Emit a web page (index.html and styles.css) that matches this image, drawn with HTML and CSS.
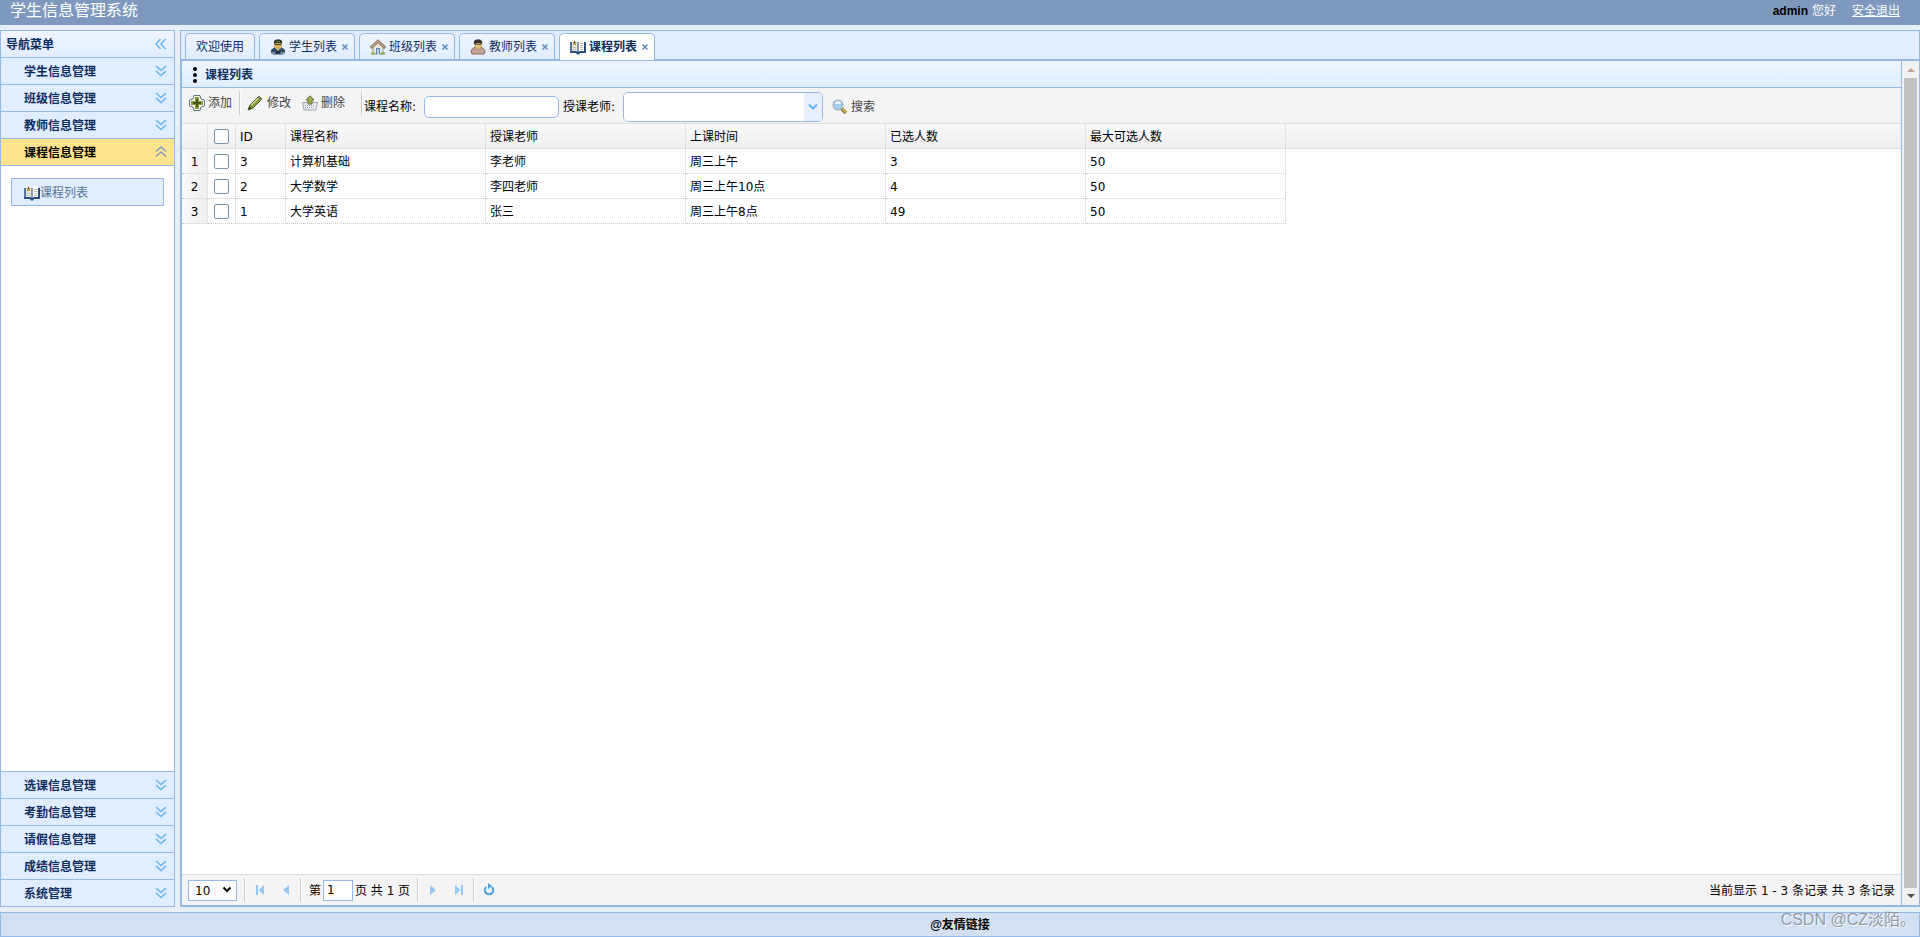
FILE: index.html
```html
<!DOCTYPE html>
<html lang="zh-CN">
<head>
<meta charset="utf-8">
<title>学生信息管理系统</title>
<link rel="stylesheet" href="styles.css">
</head>
<body>
<svg class="defs" aria-hidden="true">
  <symbol id="i-down" viewBox="0 1 16 16"><path d="M3 3l5 4.500 5-4.500M3 8l5 4.500 5-4.500"/></symbol>
  <symbol id="i-up" viewBox="0 1 16 16"><path d="M3 7.500l5-4.500 5 4.500M3 12.500l5-4.500 5 4.500"/></symbol>
  <symbol id="i-left" viewBox="0 1 16 16"><path d="M7.500 3L3 8l4.500 5M12.500 3L8 8l4.500 5"/></symbol>
  <symbol id="i-book" viewBox="0 0 16 16">
    <path d="M0 3h16v11h-6l-1 1.500H7L6 14H0z" fill="#294d7c"/>
    <path d="M0 3h1.500v9.500H0z" fill="#5c7da5"/>
    <path d="M2 1.500h4.500l1 1V13l-1-1H2z" fill="#e9e4dc"/><path d="M8.500 2.500l1-1H14V12H9.500l-1 1z" fill="#fff"/>
    <path d="M8 3v10" stroke="#8a8f96"/><path d="M3 3h3v3H3z" fill="#b49b42"/><path d="M4 2h1v2H4z" fill="#56502e"/>
    <path d="M10 4.500h3M10 6.500h3M10 8.500h3M10 10.500h3M3 8.500h3M3 10.500h3" stroke="#c5b9ac"/>
  </symbol>
  <symbol id="i-student" viewBox="0 0 16 16">
    <path d="M1 14v-3l3-2.500h8l3 2.500v3l-2 1.500H3z" fill="#344966"/><path d="M5 8.500h6L8 12z" fill="#d8c275"/>
    <path d="M4 4h8v4l-2 2H6L4 8z" fill="#d5b365"/><path d="M4 6V2l2-1.500h4L12 2v4l-1-2H5z" fill="#2c2c22"/>
    <path d="M5 5.500h6" stroke="#3b371f"/><path d="M6 2.500h4" stroke="#6e8240"/><path d="M1 13h4v2H2zM11 13h4l-1 2h-3z" fill="#8194aa"/><path d="M6 12h4v2H6z" fill="#242f3d"/>
  </symbol>
  <symbol id="i-teacher" viewBox="0 0 16 16">
    <path d="M1 13c0-3 3-5 7-5s7 2 7 5l-1 2H2z" fill="#c3a293" stroke="#8b6d60"/>
    <path d="M5 3h7v4l-2 3H7L5 8z" fill="#e0c17b" stroke="#a98b49" stroke-width=".5"/><path d="M4 6V2l2-1.500h4L12 2v3l-4-1-3 1z" fill="#34342a"/><path d="M5 5.500h6" stroke="#7a6b45"/>
  </symbol>
  <symbol id="i-house" viewBox="0 0 16 16">
    <path d="M3 8l5-5 5 5v7H3z" fill="#e9e7df" stroke="#9a9a94"/><path d="M6 9h4v6H6z" fill="#5c83ad"/><path d="M7 10h2v5H7z" fill="#b9d3e6"/>
    <path d="M.800 9L8 2.200 15.200 9" fill="none" stroke="#796753" stroke-width="3"/><path d="M1.500 8.500L8 2.300l6.500 6.200" fill="none" stroke="#c6aa91" stroke-width="1.500"/>
    <path d="M1 14.500h4M11 14.500h4" stroke="#82ad42" stroke-width="2"/>
  </symbol>
  <symbol id="i-add" viewBox="0 0 16 16">
    <path d="M5 .500h6l1 3.500 3.500 1v6L12 12l-1 3.500H5L4 12 .500 11V5L4 4z" fill="#f4f6ec" stroke="#5c7480"/><path d="M6 2h4v4h4v4h-4v4H6v-4H2V6h4z" fill="#899b35"/><path d="M7 4h2v3h3v2H9v3H7V9H4V7h3z" fill="#4b5619"/>
  </symbol>
  <symbol id="i-edit" viewBox="0 0 16 16">
    <path d="M1 15l2-5L11.500 1.500 14.500 4.500 6 13z" fill="#829a36" stroke="#4d5b24"/><path d="M4 10.500l8-8" stroke="#c5d58d" stroke-width="1.500"/><path d="M1 15l1.500-4L5 13.500z" fill="#404326"/><path d="M11.500 1.500l3 3" stroke="#6b6b58" stroke-width="2"/>
  </symbol>
  <symbol id="i-remove" viewBox="0 0 16 16">
    <path d="M.500 7.500h15L14 15H2z" fill="#e8eaed" stroke="#a0a4ac"/><path d="M3 10.500h10M3 12.500h10" stroke="#98a2ae" stroke-dasharray="1 1"/>
    <path d="M8 .800L12 5h-2v4H6V5H4z" fill="#9daf51" stroke="#647333"/>
  </symbol>
  <symbol id="i-search" viewBox="0 0 16 16">
    <path d="M9.500 9.500L14 14" stroke="#8a7430" stroke-width="3.500"/><path d="M10.500 10L14 13.500" stroke="#e2c65a" stroke-width="1.500"/>
    <circle cx="6" cy="6" r="4.800" fill="#a3cff3" stroke="#a9b4c0" stroke-width="1.500"/><path d="M3 5a3 3 0 016 0z" fill="#e5f3ff"/>
  </symbol>
</svg>

<header class="top">
  <h1 class="brand">学生信息管理系统</h1>
  <div class="account"><strong class="user">admin</strong><span>您好</span><a class="logout" href="#">安全退出</a></div>
</header>

<div class="body">
  <nav class="side">
    <div class="side-head"><span>导航菜单</span><button class="ico-btn" aria-label="折叠"><svg class="chev"><use href="#i-left"/></svg></button></div>
    <button class="acc">学生信息管理<svg class="chev"><use href="#i-down"/></svg></button>
    <button class="acc">班级信息管理<svg class="chev"><use href="#i-down"/></svg></button>
    <button class="acc">教师信息管理<svg class="chev"><use href="#i-down"/></svg></button>
    <button class="acc open">课程信息管理<svg class="chev"><use href="#i-up"/></svg></button>
    <div class="acc-body"><a class="side-link" href="#"><svg class="ico"><use href="#i-book"/></svg>课程列表</a></div>
    <button class="acc low">选课信息管理<svg class="chev"><use href="#i-down"/></svg></button>
    <button class="acc low">考勤信息管理<svg class="chev"><use href="#i-down"/></svg></button>
    <button class="acc low">请假信息管理<svg class="chev"><use href="#i-down"/></svg></button>
    <button class="acc low">成绩信息管理<svg class="chev"><use href="#i-down"/></svg></button>
    <button class="acc low">系统管理<svg class="chev"><use href="#i-down"/></svg></button>
  </nav>

  <main class="main">
    <div class="tabs">
      <button class="tab plain">欢迎使用</button>
      <div class="tab"><svg class="ico"><use href="#i-student"/></svg><span>学生列表</span><button class="close" aria-label="关闭"><svg viewBox="0 0 8 8"><path d="M1.500 1.500l5 5M6.500 1.500l-5 5"/></svg></button></div>
      <div class="tab"><svg class="ico"><use href="#i-house"/></svg><span>班级列表</span><button class="close" aria-label="关闭"><svg viewBox="0 0 8 8"><path d="M1.500 1.500l5 5M6.500 1.500l-5 5"/></svg></button></div>
      <div class="tab"><svg class="ico"><use href="#i-teacher"/></svg><span>教师列表</span><button class="close" aria-label="关闭"><svg viewBox="0 0 8 8"><path d="M1.500 1.500l5 5M6.500 1.500l-5 5"/></svg></button></div>
      <div class="tab current"><svg class="ico"><use href="#i-book"/></svg><span>课程列表</span><button class="close" aria-label="关闭"><svg viewBox="0 0 8 8"><path d="M1.500 1.500l5 5M6.500 1.500l-5 5"/></svg></button></div>
    </div>
    <div class="pane">
      <section class="panel">
        <h2 class="panel-head"><svg class="dots" viewBox="0 0 4 16"><circle cx="2" cy="2" r="2"/><circle cx="2" cy="8" r="2"/><circle cx="2" cy="14" r="2"/></svg>课程列表</h2>
        <div class="toolbar">
          <button class="tool"><svg class="ico"><use href="#i-add"/></svg>添加</button>
          <i class="sep"></i>
          <button class="tool edit"><svg class="ico"><use href="#i-edit"/></svg>修改</button>
          <button class="tool"><svg class="ico"><use href="#i-remove"/></svg>删除</button>
          <i class="sep wide"></i>
          <form class="filter">
            <label for="course">课程名称:</label>
            <input class="text" id="course" type="text">
            <label for="teacher">授课老师:</label>
            <span class="combo"><input id="teacher" type="text"><button type="button" class="combo-btn" aria-label="展开"><svg viewBox="0 0 12 8"><path d="M2 1.500l4 4 4-4"/></svg></button></span>
            <button class="tool search" type="button"><svg class="ico"><use href="#i-search"/></svg>搜索</button>
          </form>
        </div>
        <div class="grid">
          <table>
            <colgroup><col class="c-no"><col class="c-check"><col class="c-id"><col class="c-data"><col class="c-data"><col class="c-data"><col class="c-data"><col class="c-data"><col></colgroup>
            <thead><tr><th></th><th class="mid"><input type="checkbox" aria-label="全选"></th><th>ID</th><th>课程名称</th><th>授课老师</th><th>上课时间</th><th>已选人数</th><th>最大可选人数</th><th class="rest"></th></tr></thead>
            <tbody>
              <tr><td class="no">1</td><td class="mid"><input type="checkbox" aria-label="选择 1"></td><td>3</td><td>计算机基础</td><td>李老师</td><td>周三上午</td><td>3</td><td>50</td><td class="rest"></td></tr>
              <tr><td class="no">2</td><td class="mid"><input type="checkbox" aria-label="选择 2"></td><td>2</td><td>大学数学</td><td>李四老师</td><td>周三上午10点</td><td>4</td><td>50</td><td class="rest"></td></tr>
              <tr><td class="no">3</td><td class="mid"><input type="checkbox" aria-label="选择 3"></td><td>1</td><td>大学英语</td><td>张三</td><td>周三上午8点</td><td>49</td><td>50</td><td class="rest"></td></tr>
            </tbody>
          </table>
        </div>
        <div class="pager">
          <span class="size"><select aria-label="每页条数"><option>10</option></select><svg viewBox="0 0 10 8"><path d="M1.500 1.500l3.500 3.500 3.500-3.500"/></svg></span>
          <i class="sep"></i>
          <button class="pg" aria-label="首页"><svg viewBox="0 0 16 16"><path d="M4 3h2v10H4zM12 3v10L6.500 8z"/></svg></button>
          <button class="pg" aria-label="上一页"><svg viewBox="0 0 16 16"><path d="M11 3v10L5 8z"/></svg></button>
          <i class="sep"></i>
          <label class="page-no" for="page">第</label><input class="page" id="page" type="text" value="1"><span class="page-all">页 共 1 页</span>
          <i class="sep"></i>
          <button class="pg" aria-label="下一页"><svg viewBox="0 0 16 16"><path d="M5 3v10l6-5z"/></svg></button>
          <button class="pg" aria-label="末页"><svg viewBox="0 0 16 16"><path d="M10 3h2v10h-2zM4 3v10l5.500-5z"/></svg></button>
          <i class="sep"></i>
          <button class="pg" aria-label="刷新"><svg viewBox="0 0 16 16"><path class="ring" d="M5.200 5A4.200 4.200 0 1 0 10.800 5"/><path class="tip" d="M7 1l4 3-4 3z"/></svg></button>
          <span class="info">当前显示 1 - 3 条记录 共 3 条记录</span>
        </div>
      </section>
      <div class="scroll" aria-hidden="true">
        <svg class="arrow dim" viewBox="0 0 8 4"><path d="M0 4l4-4 4 4z"/></svg>
        <div class="thumb"></div>
        <svg class="arrow" viewBox="0 0 8 4"><path d="M0 0l4 4 4-4z"/></svg>
      </div>
    </div>
  </main>
</div>

<footer class="foot">@友情链接</footer>
<div class="mark">CSDN @CZ淡陌。</div>
</body>
</html>
```
FILE: styles.css
```css
* { box-sizing: border-box; }
body {
  margin: 0;
  height: 100vh;
  display: flex;
  flex-direction: column;
  gap: 5px;
  background: #e6eef8;
  color: #000;
  font: 12px/20px "DejaVu Sans", "Noto Sans CJK SC", sans-serif;
  overflow: hidden;
}
button, input, select { font: inherit; color: inherit; margin: 0; padding: 0; }
button { border: 0; background: none; cursor: pointer; }
.defs { position: absolute; width: 0; height: 0; }
.ico { width: 16px; height: 16px; flex: none; }
.chev { width: 16px; height: 16px; flex: none; fill: none; stroke: #66b5f2; stroke-width: 1.5; }

.top {
  height: 25px;
  flex: none;
  display: flex;
  justify-content: space-between;
  padding: 1px 20px 0 10px;
  background: #7f99be;
  color: #fff;
}
.brand { margin: 0; font-size: 16px; font-weight: 400; line-height: 20px; }
.account { display: flex; gap: 4px; line-height: 20px; }
.user { color: #000; font-family: "Liberation Sans", sans-serif; }
.logout { margin-left: 12px; color: #fff; text-decoration: underline; }

.body { flex: 1; min-height: 0; display: flex; gap: 5px; }
.side {
  width: 175px;
  flex: none;
  display: flex;
  flex-direction: column;
  border: 1px solid #95b8e7;
  background: #fff;
}
.side-head, .acc {
  height: 27px;
  flex: none;
  display: flex;
  align-items: center;
  justify-content: space-between;
  padding: 2px 5px 0;
  color: #0e2d5f;
  font-weight: 700;
  border-bottom: 1px solid #95b8e7;
}
.side-head { background: linear-gradient(#eff5ff, #e0ecff); }
.ico-btn { height: 16px; }
.side-head .chev { display: block; }
.acc { padding-left: 23px; background: #e0ecff; text-align: left; }
.acc.open { background: #ffe48d; color: #000; }
.acc.open .chev { stroke: #7e9cc4; }
.acc.low { border-bottom: 0; border-top: 1px solid #95b8e7; }
.acc-body { flex: 1; min-height: 0; padding: 12px 10px; }
.side-link {
  height: 28px;
  display: flex;
  align-items: center;
  padding: 2px 0 0 12px;
  border: 1px solid #95b8e7;
  background: #e0ecff;
  color: #5a7394;
  text-decoration: none;
}

.main {
  flex: 1;
  min-width: 0;
  display: flex;
  flex-direction: column;
  border: 1px solid #95b8e7;
  background: #fff;
}
.tabs {
  height: 29px;
  flex: none;
  display: flex;
  gap: 4px;
  padding: 2px 4px 0;
  background: #e0ecff;
  border-bottom: 1px solid #95b8e7;
}
.tab {
  width: 96px;
  height: 26px;
  display: flex;
  align-items: center;
  padding: 0 4px 0 10px;
  border: 1px solid #95b8e7;
  border-bottom: 0;
  border-radius: 5px 5px 0 0;
  background: linear-gradient(#eff5ff, #e0ecff);
  color: #0e2d5f;
  white-space: nowrap;
}
.tab .ico { margin-right: 3px; }
.tab.plain { width: 70px; justify-content: center; padding: 0; }
.tab.current { height: 27px; background: #fff; font-weight: 700; }
.close { width: 8px; height: 8px; flex: none; margin-left: 4px; }
.close svg { display: block; width: 8px; height: 8px; stroke: #5b8cc0; stroke-width: 1.5; }

.pane {
  flex: 1;
  min-height: 0;
  display: flex;
  border: solid #95b8e7;
  border-width: 1px 0 1px 1px;
}
.panel { flex: 1; min-width: 0; display: flex; flex-direction: column; border-right: 1px solid #95b8e7; }
.panel-head {
  height: 27px;
  flex: none;
  display: flex;
  align-items: center;
  gap: 8px;
  margin: 0;
  padding: 2px 0 0 11px;
  font-size: 12px;
  color: #0e2d5f;
  background: linear-gradient(#eff5ff, #e0ecff);
  border-bottom: 1px solid #95b8e7;
}
.dots { width: 4px; height: 16px; fill: #000; }

.toolbar {
  height: 36px;
  flex: none;
  display: flex;
  align-items: flex-start;
  padding: 3px 7px 0;
  background: #f4f4f4;
  border-bottom: 1px solid #ddd;
}
.tool { height: 24px; display: flex; align-items: center; gap: 3px; color: #444; }
.sep { width: 2px; height: 24px; flex: none; border-left: 1px solid #ccc; border-right: 1px solid #fff; }
.toolbar .sep { margin: 0 6px 0 7px; }
.toolbar .sep.wide { margin: 0 1px 0 16px; }
.tool.edit { gap: 4px; margin-right: 11px; }
.filter { display: flex; align-items: center; height: 32px; }
.filter label { width: 60px; line-height: 30px; }
.text { width: 135px; height: 22px; margin-right: 4px; padding: 0 4px; border: 1px solid #95b8e7; border-radius: 5px; background: #fff; }
.filter .search { margin-left: 9px; }
.combo { width: 200px; height: 30px; display: flex; overflow: hidden; border: 1px solid #95b8e7; border-radius: 5px; background: #fff; }
.combo input { flex: 1; min-width: 0; border: 0; padding: 0 4px; background: #fff; }
.combo-btn { width: 18px; background: #e8f0ff; }
.combo-btn svg { display: block; width: 12px; height: 8px; margin: 0 auto; fill: none; stroke: #62b4f2; stroke-width: 2; }

.grid { flex: 1; min-height: 0; }
table { width: 100%; table-layout: fixed; border-collapse: separate; border-spacing: 0; }
.c-no { width: 26px; }
.c-check { width: 28px; }
.c-id { width: 50px; }
.c-data { width: 200px; }
th, td {
  height: 25px;
  padding: 2px 4px 0;
  font-weight: 400;
  text-align: left;
  border-right: 1px dotted #ccc;
  border-bottom: 1px dotted #ccc;
}
th { background: linear-gradient(#f9f9f9, #efefef); border-bottom: 1px solid #ddd; }
.no { padding: 2px 0 0; text-align: center; background: linear-gradient(to right, #f9f9f9, #efefef); }
.mid { padding: 0; text-align: center; }
.rest { border-right: 0; }
td.rest { border: 0; }
.mid input {
  display: block;
  width: 15px;
  height: 15px;
  margin: 0 auto;
  appearance: none;
  border: 1px solid #7c93ad;
  border-radius: 2px;
  background: #fff;
}

.pager {
  height: 31px;
  flex: none;
  display: flex;
  align-items: center;
  padding: 0 6px;
  background: #f4f4f4;
  border-top: 1px solid #ddd;
}
.size { display: grid; align-items: center; margin-right: 6px; }
.size select, .size svg { grid-area: 1 / 1; }
.size select { width: 49px; height: 21px; padding: 0 6px; appearance: none; border: 1px solid #95b8e7; border-radius: 0; background: #fff; }
.size svg { width: 10px; height: 8px; justify-self: end; margin-right: 5px; fill: none; stroke: #000; stroke-width: 2; pointer-events: none; }
.pager .sep { margin: 0 1px; }
.pg { width: 26px; height: 26px; display: grid; place-items: center; }
.pg svg { width: 16px; height: 16px; fill: #95c8f4; }
.pg .ring { fill: none; stroke: #519fdc; stroke-width: 2; }
.pg .tip { fill: #519fdc; }
.page-no { margin: 0 2px 0 6px; }
.page { width: 30px; height: 21px; padding: 0 3px; border: 1px solid #95b8e7; }
.page-all { margin: 0 6px 0 2px; }
.info { margin-left: auto; }
.page-no, .page-all, .info { padding-top: 2px; }

.scroll { width: 17px; flex: none; display: flex; flex-direction: column; align-items: center; gap: 6px; padding: 7px 1px; background: #f1f1f1; }
.thumb { flex: 1; width: 13px; background: #c1c1c1; }
.arrow { width: 8px; height: 4px; flex: none; fill: #505050; }
.arrow.dim { fill: #c5a294; }

.foot {
  height: 25px;
  flex: none;
  display: flex;
  align-items: center;
  justify-content: center;
  border: 1px solid #95b8e7;
  background: #d2e0f2;
  font-family: "Liberation Sans", "Noto Sans CJK SC", sans-serif;
  font-weight: 700;
}
.mark {
  position: absolute;
  right: 4px;
  bottom: 5px;
  font: 16px/24px "Liberation Sans", "Noto Sans CJK SC", sans-serif;
  color: #9299a3;
  text-shadow: 1px 1px 1px #fff;
  pointer-events: none;
}
```
